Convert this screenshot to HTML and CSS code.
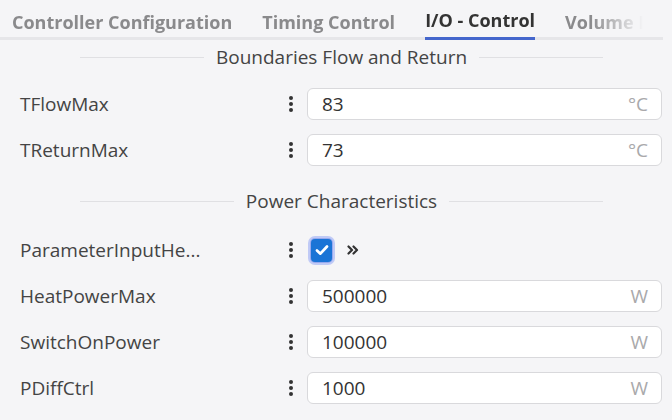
FILE: index.html
```html
<!DOCTYPE html>
<html>
<head>
    <title>I/O - Control</title>
    <meta charset="UTF-8">
    <link rel="stylesheet" href="styles.css">
</head>
<body>
    <div class="tabbar">
        <div class="tab-list">
            <span class="tab">Controller Configuration</span>
            <span class="tab">Timing Control</span>
            <span class="tab active">I/O - Control</span>
            <span class="tab">Volume Flow</span>
        </div>
    </div>

    <div class="section first">
        <div class="section-title"><span class="line"></span><span>Boundaries Flow and Return</span><span class="line"></span></div>
        <div class="row">
            <span class="label">TFlowMax</span>
            <span class="kebab"><i></i><i></i><i></i></span>
            <div class="field"><span class="value">83</span><span class="unit">°C</span></div>
        </div>
        <div class="row">
            <span class="label">TReturnMax</span>
            <span class="kebab"><i></i><i></i><i></i></span>
            <div class="field"><span class="value">73</span><span class="unit">°C</span></div>
        </div>
    </div>

    <div class="section second">
        <div class="section-title"><span class="line"></span><span>Power Characteristics</span><span class="line"></span></div>
        <div class="row">
            <span class="label">ParameterInputHe...</span>
            <span class="kebab"><i></i><i></i><i></i></span>
            <div class="check-wrap">
                <span class="checkbox">
                    <svg width="16" height="16" viewBox="0 0 14 14"><path d="M2.6 7.4 L5.6 10.2 L11.4 3.9" fill="none" stroke="#fff" stroke-width="2.4" stroke-linecap="round" stroke-linejoin="round"/></svg>
                </span>
                <svg class="chevrons" width="12" height="12" viewBox="0 0 12 12"><path d="M1.5 2.5 L5 6 L1.5 9.5 M6.5 2.5 L10 6 L6.5 9.5" fill="none" stroke="#333" stroke-width="2.2" stroke-linecap="round" stroke-linejoin="round"/></svg>
            </div>
        </div>
        <div class="row">
            <span class="label">HeatPowerMax</span>
            <span class="kebab"><i></i><i></i><i></i></span>
            <div class="field"><span class="value">500000</span><span class="unit">W</span></div>
        </div>
        <div class="row">
            <span class="label">SwitchOnPower</span>
            <span class="kebab"><i></i><i></i><i></i></span>
            <div class="field"><span class="value">100000</span><span class="unit">W</span></div>
        </div>
        <div class="row">
            <span class="label">PDiffCtrl</span>
            <span class="kebab"><i></i><i></i><i></i></span>
            <div class="field"><span class="value">1000</span><span class="unit">W</span></div>
        </div>
    </div>
</body>
</html>
```

FILE: styles.css
```css
body { margin: 0; background-color: #f5f5f7; font-family: "Open Sans", "Noto Sans", sans-serif; font-size: 19px; color: #3c3c3c; width: 672px; height: 420px; overflow: hidden; }

/* tabs */
.tabbar { height: 37px; border-bottom: 3px solid #e6e6e9; margin-right: 9px; }
.tab-list { display: flex; gap: 30px; padding-left: 12px; height: 40px; overflow: hidden; white-space: nowrap; -webkit-mask-image: linear-gradient(to right, #000 89%, transparent 97%); mask-image: linear-gradient(to right, #000 89%, transparent 97%); }
.tab { font-weight: 700; font-size: 18px; color: #8a8a8c; line-height: 44px; height: 37px; box-sizing: border-box; }
.tab.active { color: #333; border-bottom: 3px solid #4466cc; height: 40px; line-height: 41px; }

/* sections */
.section-title { display: flex; align-items: center; gap: 12px; margin: 0 69px 7px 80px; height: 34px; white-space: nowrap; color: #444; }
.section-title .line { flex: 1; height: 1px; background-color: #e0e0e3; }
.section.second .section-title { margin-top: 11px; margin-bottom: 9px; }

.row { display: flex; align-items: center; height: 46px; padding: 0 10px 0 20px; }
.label { width: 264px; color: #444; }
.kebab { display: flex; flex-direction: column; gap: 2px; width: 4px; margin: 0 14px 0 5px; }
.kebab i { display: block; width: 4px; height: 4px; border-radius: 50%; background-color: #333; }

.field { flex: 1; height: 32px; box-sizing: border-box; display: flex; align-items: center; justify-content: space-between; padding: 0 13px 0 14px; background-color: #fff; border: 1px solid #d9d9dc; border-radius: 6px; }
.value { color: #333; }
.unit { color: #a9a9ab; }

.check-wrap { display: flex; align-items: center; gap: 15px; }
.checkbox { width: 21px; height: 23px; box-sizing: border-box; display: flex; align-items: center; justify-content: center; background-color: #1a74d6; border-radius: 4px; box-shadow: 0 0 0 1px #97a9ee, 0 0 0 3px #c0caf6; margin-left: 4px; }
.chevrons { display: block; }
```
